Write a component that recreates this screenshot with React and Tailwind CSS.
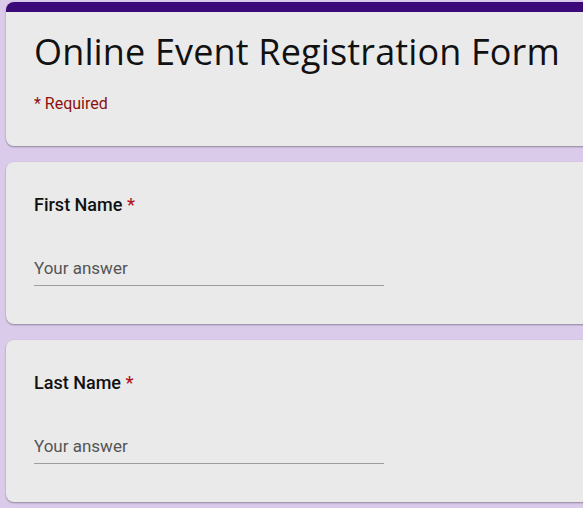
export default function App() {
  return (
    <div className="min-h-[508px] w-[583px] overflow-hidden bg-[#dacbeb] pt-[2px] pl-[6px]" style={{ fontFamily: "Roboto, 'Liberation Sans', sans-serif" }}>
      <div className="flex w-[600px] flex-col gap-[16px]">
        {/* Header card */}
        <div className="h-[144px] overflow-hidden rounded-[8px] bg-[#eaeaea] shadow-[0_1px_2px_rgba(0,0,0,0.35)]">
          <div className="h-[10px] bg-[#3b0a78]"></div>
          <div className="pl-[28px] pt-[16px]">
            <h1 className="text-[36px] leading-[48px] text-[#111]" style={{ fontFamily: "'Open Sans', sans-serif", letterSpacing: "0.15px" }}>
              Online Event Registration Form
            </h1>
            <p className="mt-[17px] text-[16px] leading-[22px] text-[#8c1010]">* Required</p>
          </div>
        </div>

        {/* Questions */}
        {["First Name", "Last Name"].map((label) => (
          <div key={label} className="h-[162px] rounded-[8px] bg-[#eaeaea] px-[28px] pt-[31px] shadow-[0_1px_2px_rgba(0,0,0,0.35)]">
            <div className="text-[18px] font-medium leading-[24px] text-[#111]">
              {label} <span className="text-[#b3121b]">*</span>
            </div>
            <div className="mt-[39px] w-[350px] border-b border-[#9e9e9e] pb-[5px] text-[17px] leading-[24px] text-[#555]">
              Your answer
            </div>
          </div>
        ))}
      </div>
    </div>
  );
}
